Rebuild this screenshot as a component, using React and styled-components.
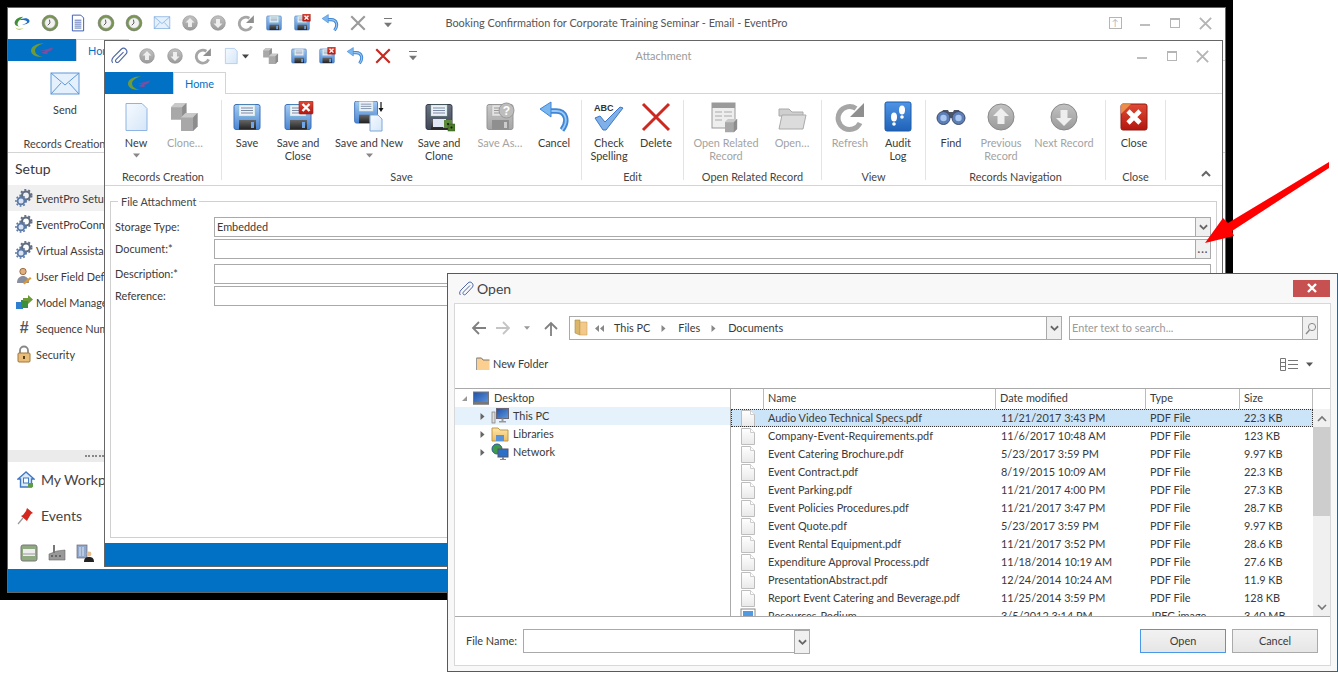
import React from 'react';
import styled, { createGlobalStyle } from 'styled-components';

const BLUE = '#0071c5';
const FONT = 'Lato, "Open Sans", "Liberation Sans", sans-serif';

const Global = createGlobalStyle`
  html, body { margin: 0; background: #fff; }
  body { font: 10.9px ${FONT}; color: #3a3a3a; }
  * { box-sizing: border-box; }
`;

/* ---------- icons ---------- */
const Svg = ({ size = 32, children, vb = 32 }) => (
  <svg width={size} height={size} viewBox={`0 0 ${vb} ${vb}`} style={{ display: 'block', flexShrink: 0 }}>{children}</svg>
);

const Gradients = () => (
  <svg width="0" height="0" style={{ position: 'absolute' }}>
    <defs>
      <linearGradient id="floppy" x1="0" y1="0" x2="0" y2="1"><stop offset="0" stopColor="#a5cbf4" /><stop offset="1" stopColor="#4a86d2" /></linearGradient>
      <linearGradient id="floppyDark" x1="0" y1="0" x2="0" y2="1"><stop offset="0" stopColor="#6b7280" /><stop offset="1" stopColor="#3f4656" /></linearGradient>
      <linearGradient id="floppyGrey" x1="0" y1="0" x2="0" y2="1"><stop offset="0" stopColor="#c8c8c8" /><stop offset="1" stopColor="#a5a5a5" /></linearGradient>
      <linearGradient id="slot" x1="0" y1="0" x2="0" y2="1"><stop offset="0" stopColor="#666" /><stop offset="1" stopColor="#222" /></linearGradient>
      <linearGradient id="page" x1="0" y1="0" x2="1" y2="1"><stop offset="0" stopColor="#f6faff" /><stop offset="1" stopColor="#d5e6f8" /></linearGradient>
      <linearGradient id="greyBall" x1="0" y1="0" x2="0" y2="1"><stop offset="0" stopColor="#c2c2c2" /><stop offset="1" stopColor="#9a9a9a" /></linearGradient>
      <linearGradient id="filePage" x1="0" y1="0" x2="0" y2="1"><stop offset="0" stopColor="#fff" /><stop offset="1" stopColor="#e9e9e9" /></linearGradient>
      <linearGradient id="redBox" x1="0" y1="0" x2="0" y2="1"><stop offset="0" stopColor="#e04a35" /><stop offset="1" stopColor="#b3170f" /></linearGradient>
      <linearGradient id="book" x1="0" y1="0" x2="0" y2="1"><stop offset="0" stopColor="#4f95e6" /><stop offset="1" stopColor="#1f62b8" /></linearGradient>
      <linearGradient id="folderG" x1="0" y1="0" x2="0" y2="1"><stop offset="0" stopColor="#fde6a8" /><stop offset="1" stopColor="#eebd62" /></linearGradient>
      <linearGradient id="screen" x1="0" y1="0" x2="1" y2="1"><stop offset="0" stopColor="#1f4fa8" /><stop offset="1" stopColor="#5f9ae0" /></linearGradient>
    </defs>
  </svg>
);

const FloppyShape = ({ tone = 'blue' }) => {
  const fill = tone === 'blue' ? 'url(#floppy)' : tone === 'grey' ? 'url(#floppyGrey)' : 'url(#floppyDark)';
  const edge = tone === 'blue' ? '#3a70b8' : tone === 'grey' ? '#949494' : '#333a48';
  const slot = tone === 'grey' ? '#8f8f8f' : 'url(#slot)';
  return (
    <>
      <rect x="3" y="3.5" width="26" height="25" rx="2" fill={fill} stroke={edge} />
      <rect x="8" y="4" width="16" height="11" fill={tone === 'grey' ? '#e4e4e4' : '#eef2f8'} stroke={tone === 'grey' ? '#aaa' : '#8ca'} strokeOpacity=".4" />
      <path d="M10 7h12M10 9.5h12M10 12h12" stroke={tone === 'grey' ? '#999' : '#7a8ba5'} />
      <rect x="8" y="19" width="17" height="9.5" fill={slot} />
      <rect x="20" y="21" width="3" height="6" fill={tone === 'grey' ? '#ccc' : '#6ea6e6'} />
    </>
  );
};

const Save = ({ size }) => <Svg size={size}><FloppyShape /></Svg>;
const SaveClose = ({ size }) => (
  <Svg size={size}>
    <FloppyShape />
    <rect x="17" y="0" width="14" height="13" rx="1" fill="url(#redBox)" stroke="#922" strokeWidth=".6" />
    <path d="M20.5 3l7 7M27.5 3l-7 7" stroke="#fff" strokeWidth="2.4" />
  </Svg>
);
const SaveNew = ({ size }) => (
  <Svg size={size}>
    <g transform="translate(-1 -3) scale(.88)"><FloppyShape /></g>
    <path d="M17 14h8l4 4v12H17z" fill="url(#page)" stroke="#7fa8d8" />
    <path d="M28 1v8" stroke="#111" strokeWidth="1.2" /><path d="M25.5 7h5L28 11z" fill="#111" />
  </Svg>
);
const SaveClone = ({ size }) => (
  <Svg size={size}>
    <FloppyShape tone="dark" />
    <rect x="10" y="18" width="13" height="8" fill="#dfe8f4" />
    <rect x="21" y="19" width="8" height="8" fill="#5d8a3c" />
    <rect x="25" y="23" width="7" height="7" fill="#4d7a2c" stroke="#2f5a18" strokeWidth=".5" />
    <circle cx="25" cy="23" r="1" fill="#111" /><circle cx="28.5" cy="26.5" r="1" fill="#111" />
  </Svg>
);
const SaveAs = ({ size }) => (
  <Svg size={size}>
    <FloppyShape tone="grey" />
    <circle cx="22.5" cy="9.5" r="7.5" fill="#bdbdbd" stroke="#999" />
    <text x="22.5" y="14" fontSize="12" fontWeight="700" fill="#fff" textAnchor="middle" fontFamily="Liberation Sans">?</text>
  </Svg>
);
const Undo = ({ size }) => (
  <Svg size={size}>
    <path d="M10 10h8c10 0 13 10 6 19" fill="none" stroke="#3f86d6" strokeWidth="5.4" />
    <path d="M10 10h8c10 0 13 10 6 19" fill="none" stroke="#9cc9f4" strokeWidth="1.8" />
    <path d="M2 8L13 1v15z" fill="#7ab6f0" stroke="#3f86d6" />
  </Svg>
);
const Cross = ({ size, color = '#9b9b9b', w = 3.8 }) => (
  <Svg size={size}><path d="M4 4l24 24M28 4L4 28" stroke={color} strokeWidth={w} /></Svg>
);
const Delete = ({ size }) => (
  <Svg size={size}><path d="M3 3l26 26M29 3L3 29" stroke="#cc2a20" strokeWidth="3" /></Svg>
);
const Ball = ({ size, up }) => (
  <Svg size={size}>
    <circle cx="16" cy="16" r="13" fill="url(#greyBall)" stroke="#8a8a8a" />
    <path d={up ? 'M16 7l8 8h-4.5v8h-7v-8H8z' : 'M16 25l8-8h-4.5V9h-7v8H8z'} fill="#eee" />
  </Svg>
);
const Refresh = ({ size }) => (
  <Svg size={size}>
    <path d="M26 22A11.5 11.5 0 1 1 22 7.5" fill="none" stroke="#a6a6a6" strokeWidth="5" />
    <path d="M30 2v14H16z" fill="#8f8f8f" />
  </Svg>
);
const NewPage = ({ size }) => (
  <Svg size={size}><path d="M6 2.5h16l5 5v22H6z" fill="url(#page)" stroke="#8db4e2" /></Svg>
);
const Cube = ({ x, y, s = 13 }) => (
  <g transform={`translate(${x} ${y})`}>
    <path d={`M0 ${s * 0.3}L${s * 0.3} 0H${s * 1.1}V${s * 0.9}L${s * 0.8} ${s * 1.2}H0z`} fill="#a8a8a8" />
    <path d={`M0 ${s * 0.3}L${s * 0.3} 0H${s * 1.1}L${s * 0.8} ${s * 0.3}z`} fill="#c9c9c9" />
    <path d={`M${s * 0.8} ${s * 0.3}L${s * 1.1} 0V${s * 0.9}L${s * 0.8} ${s * 1.2}z`} fill="#8d8d8d" />
  </g>
);
const Clone = ({ size }) => <Svg size={size}><Cube x="2" y="2" s={14} /><Cube x="12" y="12" s={15} /></Svg>;
const Check = ({ size }) => (
  <Svg size={size}>
    <text x="1" y="10" fontSize="9" fontWeight="700" fill="#333" fontFamily="Liberation Sans">ABC</text>
    <path d="M2 17l5-2 5 6L27 6l3 1-17 22h-3z" fill="#7fb0e8" stroke="#3f78c4" />
  </Svg>
);
const RelatedRecord = ({ size }) => (
  <Svg size={size}>
    <rect x="2" y="2" width="23" height="25" fill="#eee" stroke="#999" />
    <rect x="2" y="2" width="23" height="5" fill="#9a9a9a" />
    <path d="M5 11h7M5 15h7M5 19h7M14 11h8M14 15h8" stroke="#aaa" />
    <Cube x="15" y="18" s={11} />
  </Svg>
);
const OpenFolder = ({ size }) => (
  <Svg size={size}>
    <path d="M3 8h10l3 3h11v4H3z" fill="#cfcfcf" stroke="#aaa" />
    <path d="M6 14h24l-3 14H3z" fill="#dcdcdc" stroke="#aaa" />
  </Svg>
);
const Audit = ({ size }) => (
  <Svg size={size}>
    <rect x="3" y="1" width="26" height="29" rx="2" fill="url(#book)" stroke="#1a5aa8" />
    <ellipse cx="12" cy="16" rx="3" ry="4.5" fill="#fff" /><ellipse cx="12" cy="23" rx="1.8" ry="1.8" fill="#fff" />
    <ellipse cx="20" cy="9" rx="3" ry="4.5" fill="#fff" /><ellipse cx="20" cy="16" rx="1.8" ry="1.8" fill="#fff" />
  </Svg>
);
const Binoculars = ({ size }) => (
  <Svg size={size}>
    <path d="M8 9h5l1 2h4l1-2h5l4 8H4z" fill="#4d5566" />
    <circle cx="8.5" cy="17" r="6.5" fill="#5d7fb8" stroke="#3d4a66" /><circle cx="23.5" cy="17" r="6.5" fill="#5d7fb8" stroke="#3d4a66" />
    <circle cx="8.5" cy="17" r="3.2" fill="#a9c6f0" /><circle cx="23.5" cy="17" r="3.2" fill="#a9c6f0" />
  </Svg>
);
const CloseBox = ({ size }) => (
  <Svg size={size}>
    <rect x="3" y="3" width="26" height="26" rx="2" fill="url(#redBox)" stroke="#8f1a10" />
    <path d="M3 3h10L3 13z" fill="#f0a050" opacity=".8" />
    <path d="M10 10l12 12M22 10L10 22" stroke="#fff" strokeWidth="4.6" />
  </Svg>
);
const Mail = ({ size }) => (
  <Svg size={size}>
    <rect x="2" y="5" width="28" height="21" fill="#e4f0fc" stroke="#5f97d8" />
    <path d="M2 5l14 12L30 5M2 26l10-11M30 26L20 15" fill="none" stroke="#5f97d8" />
  </Svg>
);
const Clock = ({ size }) => (
  <Svg size={size}>
    <circle cx="16" cy="16" r="14" fill="#789650" stroke="#666" />
    <circle cx="16" cy="16" r="9.5" fill="#f2f2f2" stroke="#999" />
    <path d="M16 16l-1-6M16 16l-4 4" stroke="#444" strokeWidth="1.5" />
  </Svg>
);
const Doc = ({ size }) => (
  <Svg size={size}>
    <path d="M6 2h15l5 5v23H6z" fill="#fff" stroke="#2c4fa8" strokeWidth="1.6" />
    <path d="M10 11h12M10 14.5h12M10 18h12M10 21.5h12M10 25h12" stroke="#2c4fa8" strokeWidth="1.4" />
  </Svg>
);
const Clip = ({ size, color = '#4f66a8' }) => (
  <Svg size={size}>
    <path d="M24 9L11 22c-2 2-1 4 0 5s3 1 5-1L29 12c2-3 1-6-1-8s-5-3-8 0L6 18c-4 5-3 8-1 10" fill="none" stroke={color} strokeWidth="2" />
  </Svg>
);
const LogoSwirl = ({ size }) => (
  <Svg size={size}>
    <path d="M18 5C8 5 2 12 3 17c1 4 5 5 9 5-4-1-5-4-3-8 2-3 6-6 9-9z" fill="#3f8f3a" />
    <path d="M11 11c6-4 15-5 18 0 2 4-5 8-13 8 4-1 9-3 9-5 0-3-8-4-14-3z" fill="#1f6fc0" />
    <path d="M4 24c4 3 10 3 15 1-5 4-11 5-15-1z" fill="#b9cf5a" />
  </Svg>
);
const BrandMark = () => (
  <svg width="23" height="16" viewBox="0 0 34 22" style={{ display: 'block' }}>
    <path d="M20 1C8 1 0 6 0 12c0 6 8 10 18 9-8-1-12-5-12-9 0-5 6-9 14-11z" fill="#6f9a3a" />
    <path d="M13 12c7-1 14-3 20-5-2 4-4 6-9 7 1 1 1 2 0 3-3 0-7-1-9-2 3-1 5-2 7-3z" fill="#7a4fa0" />
  </svg>
);
const Gears = ({ size = 18 }) => (
  <Svg size={size} vb={18}>
    <circle cx="11" cy="6.5" r="4" fill="none" stroke="#5f6c80" strokeWidth="2.2" />
    <circle cx="11" cy="6.5" r="5.6" fill="none" stroke="#5f6c80" strokeWidth="1.8" strokeDasharray="2 2" />
    <circle cx="6" cy="12" r="3.4" fill="#d8e4f2" stroke="#5a78a8" strokeWidth="1.8" />
    <circle cx="6" cy="12" r="5" fill="none" stroke="#5a78a8" strokeWidth="1.6" strokeDasharray="1.8 1.8" />
  </Svg>
);
const UserField = () => (
  <Svg size={18} vb={18}>
    <circle cx="8" cy="4.5" r="3.2" fill="#e0b080" stroke="#8a5a30" strokeWidth=".8" />
    <path d="M2 16c0-5 3-7 6-7s6 2 6 7z" fill="#8a8fa0" />
    <path d="M8 16l7-6 1.5 1.5-7 6z" fill="#d89a3a" />
  </Svg>
);
const ModelMgr = () => (
  <Svg size={18} vb={18}>
    <rect x="1" y="9" width="7" height="7" fill="#2f7fd0" />
    <rect x="6" y="7" width="7" height="8" fill="#3c8f3c" />
    <path d="M8 5h5V2l5 4.5L13 11V8H8z" fill="#6a9a3a" />
  </Svg>
);
const LockIco = () => (
  <Svg size={18} vb={18}>
    <path d="M5 8V5.5a4 4 0 0 1 8 0V8" fill="none" stroke="#888" strokeWidth="1.8" />
    <rect x="3" y="8" width="12" height="9" rx="1" fill="#e8bd78" stroke="#a0763a" />
    <rect x="8" y="11" width="2" height="3" fill="#5a3d18" />
  </Svg>
);
const HomeIco = () => (
  <Svg size={18} vb={18}>
    <path d="M9 1L1 8h2.5v8h11V8H17z" fill="#dce9f8" stroke="#3f78c4" strokeWidth="1.4" />
    <rect x="6.5" y="7" width="5" height="5" fill="#fff" stroke="#3f78c4" />
    <rect x="11" y="12" width="5" height="4" fill="#5e9a4a" />
  </Svg>
);
const PinIco = () => (
  <Svg size={18} vb={18}>
    <path d="M10 1l6 5-2 1-3 5-1 2-6-5 2-1 3-4z" fill="#d4281e" />
    <path d="M6 11l-5 6" stroke="#999" strokeWidth="1.2" />
  </Svg>
);
const BedIco = () => (
  <Svg size={18} vb={18}>
    <rect x="1" y="1" width="16" height="16" rx="2" fill="#8faa80" stroke="#777" />
    <rect x="3" y="5" width="12" height="7" fill="#eee" /><path d="M3 10h12" stroke="#999" />
  </Svg>
);
const PlantIco = () => (
  <Svg size={18} vb={18}>
    <path d="M1 10l8-3 8-1v10H1z" fill="#999" stroke="#666" strokeWidth=".6" />
    <rect x="5" y="1" width="2" height="8" fill="#777" />
    <path d="M3 12h2M7 12h2M11 12h2" stroke="#333" />
  </Svg>
);
const BuildingIco = () => (
  <Svg size={18} vb={18}>
    <rect x="1" y="1" width="10" height="13" fill="#8fa8cc" stroke="#667" strokeWidth=".7" />
    <path d="M4 3v9M7 3v9" stroke="#dfe8f4" />
    <circle cx="13" cy="10" r="2.4" fill="#e8bd88" />
    <path d="M8 18c0-4 2-5 5-5s5 1 5 5z" fill="#222" />
  </Svg>
);
const NewFolderIco = () => (
  <Svg size={14} vb={14}>
    <path d="M0.5 1h5l1.5 2h6.5v10H.5z" fill="#fbcf8f" />
    <path d="M0.5 3V1h5l1.5 2h6.5" fill="none" stroke="#777" />
    <path d="M.5 1v12" stroke="#999" />
  </Svg>
);
const PathFolder = () => (
  <Svg size={18} vb={18}>
    <path d="M3 1h5v15l-5-2z" fill="#d9b66a" stroke="#a98a3f" strokeWidth=".6" />
    <path d="M8 3h7v13H8z" fill="#f3c98a" stroke="#c9a15a" strokeWidth=".6" />
  </Svg>
);
const LibFolder = () => (
  <Svg size={18} vb={18}>
    <path d="M1 3h6l2 2h8v11H1z" fill="url(#folderG)" stroke="#c09a48" />
    <rect x="5" y="10" width="8" height="6" fill="#5a94d8" />
  </Svg>
);
const Monitor = ({ size = 18 }) => (
  <Svg size={size} vb={18}>
    <rect x="1.5" y="3" width="15" height="12" fill="url(#screen)" stroke="#777" />
    <rect x="1" y="13" width="16" height="2.5" fill="#777" />
  </Svg>
);
const ThisPc = () => (
  <Svg size={18} vb={18}>
    <rect x="1" y="5" width="3" height="11" fill="#ddd" stroke="#777" strokeWidth=".7" />
    <rect x="5.5" y="1.5" width="12" height="10" fill="url(#screen)" stroke="#667" />
    <path d="M8 14h7v1.5H8z M10.5 11.5h2v3h-2z" fill="#999" />
  </Svg>
);
const NetworkIco = () => (
  <Svg size={18} vb={18}>
    <circle cx="6" cy="6" r="5" fill="#3f9a4a" stroke="#2a5f9a" />
    <rect x="7" y="6" width="10" height="8" fill="#2c6fc8" stroke="#556" />
    <path d="M11 14h2v2h2v1H9v-1h2z" fill="#888" />
  </Svg>
);
const FileIco = ({ kind }) => kind === 'image' ? (
  <Svg size={18} vb={18}>
    <rect x="2" y="2" width="14" height="14" fill="#fff" stroke="#888" />
    <rect x="4" y="4" width="10" height="8" fill="#4f9ae0" />
  </Svg>
) : (
  <Svg size={18} vb={18}>
    <path d="M2.5 1.5h9l4 4v12h-13z" fill="url(#filePage)" stroke="#bdbdbd" />
    <path d="M11.5 1.5v4h4" fill="#fff" stroke="#ccc" />
  </Svg>
);
const DownChevron = ({ size = 9, color = '#666' }) => (
  <svg width={size} height={size} viewBox="0 0 10 10" style={{ display: 'block' }}><path d="M1 2.5l4 4 4-4" fill="none" stroke={color} strokeWidth="2" /></svg>
);
const Tri = ({ dir = 'down', size = 7, color = '#666' }) => {
  const d = { down: 'M0 1.5h7L3.5 5.5z', right: 'M1.5 0v7l4-3.5z', left: 'M5.5 0v7l-4-3.5z', corner: 'M6 1v5H1z' }[dir];
  return <svg width={size} height={size} viewBox="0 0 7 7" style={{ display: 'block', flexShrink: 0 }}><path d={d} fill={color} /></svg>;
};

/* ---------- window chrome ---------- */
const Page = styled.div`
  position: relative;
  width: 1338px;
  height: 673px;
  overflow: hidden;
  background: #fff;
`;
const Backdrop = styled.div`
  width: 1233px;
  height: 600px;
  background: #000;
  padding: 7px;
`;
const MainWindow = styled.div`
  height: 100%;
  background: #fff;
  border: 1px solid #666;
  display: flex;
  flex-direction: column;
  overflow: hidden;
`;
const AttachmentWindow = styled(MainWindow)`
  position: absolute;
  left: 104px;
  top: 40px;
  width: 1119px;
  height: 527px;
`;
const TitleBar = styled.div`
  height: 31px;
  padding-bottom: 1px;
  flex-shrink: 0;
  display: grid;
  grid-template-columns: 1fr auto 1fr;
  align-items: center;
`;
const TitleText = styled.div`
  padding-bottom: 1px;
  color: ${p => (p.$dim ? '#9a9a9a' : '#555')};
  white-space: nowrap;
`;
const QuickBar = styled.div`
  display: flex;
  align-items: center;
`;
const QuickSlot = styled.div`
  width: ${p => p.$w || 28}px;
  height: 24px;
  display: flex;
  align-items: center;
  justify-content: center;
`;
const MiniCaret = styled.div`
  width: 7px;
  height: 7px;
  margin: 0 8px 0 -3px;
  display: flex;
`;
const OverflowMark = styled.div`
  width: 8px;
  border-top: 1px solid #777;
  padding-top: 2px;
`;
const WinControls = styled.div`
  justify-self: end;
  display: flex;
  padding-right: 5px;
`;
const WinBtn = styled.div`
  width: 30px;
  height: 20px;
  display: flex;
  align-items: center;
  justify-content: center;
`;
const MinGlyph = styled.div`
  width: 10px;
  height: 2px;
  margin-top: 4px;
  background: #bdbdbd;
`;
const MaxGlyph = styled.div`
  width: 10px;
  height: 10px;
  border: 1px solid #b5b5b5;
  border-top-width: 2px;
`;
const PinGlyph = styled.div`
  width: 13px;
  height: 12px;
  border: 1px solid #b5b5b5;
  color: #b5b5b5;
  font-size: 9px;
  line-height: 10px;
  text-align: center;
`;
const TabRow = styled.div`
  height: 22px;
  flex-shrink: 0;
  display: flex;
  border-bottom: 1px solid #d4d4d4;
`;
const BrandTab = styled.div`
  width: 68px;
  height: 22px;
  background: ${BLUE};
  display: flex;
  align-items: center;
  justify-content: center;
`;
const HomeTab = styled.div`
  width: 53px;
  height: 22px;
  padding-top: 4px;
  text-align: center;
  color: ${BLUE};
  background: #fff;
  border: 1px solid #d4d4d4;
  border-bottom: 0;
`;
const Ribbon = styled.div`
  height: 92px;
  flex-shrink: 0;
  display: flex;
  border-bottom: 1px solid #d4d4d4;
`;
const Group = styled.div`
  width: ${p => p.$w}px;
  height: 80px;
  margin-top: 6px;
  flex-shrink: 0;
  border-right: 1px solid #e4e4e4;
  display: flex;
  flex-direction: column;
`;
const GroupButtons = styled.div`
  height: 70px;
  padding: 1px 0 0 ${p => p.$pad || 0}px;
  display: flex;
`;
const GroupLabel = styled.div`
  height: 13px;
  line-height: 13px;
  margin-bottom: -3px;
  text-align: center;
  color: #444;
  white-space: nowrap;
`;
const RibbonButton = styled.div`
  width: ${p => p.$w}px;
  flex-shrink: 0;
  display: flex;
  flex-direction: column;
  align-items: center;
  color: ${p => (p.$off ? '#a3a3a3' : '#3a3a3a')};
`;
const ButtonLabel = styled.div`
  margin-top: 3px;
  line-height: 13px;
  text-align: center;
  white-space: pre-line;
`;
const CaretBelow = styled.div`
  margin-top: 3px;
`;
const Collapse = styled.div`
  margin: 76px 11px 0 auto;
`;

/* ---------- sidebar behind ---------- */
const MainBody = styled.div`
  flex: 1;
  min-height: 0;
  display: flex;
  flex-direction: column;
`;
const Sidebar = styled.div`
  width: 300px;
  flex: 1;
  display: flex;
  flex-direction: column;
`;
const SideTitle = styled.div`
  height: 32px;
  padding: 7px 0 0 7px;
  font-size: 14px;
`;
const SideItem = styled.div`
  height: 26px;
  flex-shrink: 0;
  padding-left: 7px;
  display: flex;
  align-items: center;
  gap: 3px;
  white-space: nowrap;
  background: ${p => (p.$on ? '#f0f0f0' : 'transparent')};
`;
const SideIcon = styled.div`
  width: 18px;
  display: flex;
  justify-content: center;
  font: italic 700 16px "Liberation Sans", sans-serif;
  color: #555;
`;
const Splitter = styled.div`
  height: 12px;
  margin-top: auto;
  flex-shrink: 0;
  background: #ebebeb;
  padding: 5px 0 0 77px;
`;
const SplitDots = styled.div`
  height: 2px;
  width: 19px;
  background: repeating-linear-gradient(90deg, #888 0 2px, transparent 2px 3.4px);
`;
const WorkRow = styled.div`
  height: 36px;
  flex-shrink: 0;
  padding: 0 0 1px 9px;
  display: flex;
  align-items: center;
  gap: 6px;
  white-space: nowrap;
  font-size: 14px;
  color: #444;
`;
const MiniRow = styled.div`
  height: 35px;
  flex-shrink: 0;
  padding: 3px 0 0 12px;
  display: flex;
  align-items: center;
  gap: 10px;
`;
const StatusBar = styled.div`
  height: ${p => p.$h}px;
  flex-shrink: 0;
  background: ${BLUE};
`;

/* ---------- attachment form ---------- */
const FormArea = styled.div`
  flex: 1;
  padding: 9px 5px 5px;
  display: flex;
  background: #fff;
`;
const FieldBox = styled.fieldset`
  flex: 1;
  margin: 0;
  padding: 3px 5px 0 4px;
  border: 1px solid #d0d0d0;
  min-width: 0;
`;
const Legend = styled.legend`
  margin-left: 3px;
  padding: 0 3px;
  line-height: 13px;
  color: #444;
`;
const FormRow = styled.div`
  height: 20px;
  margin-top: ${p => p.$gap}px;
  display: flex;
`;
const FieldLabel = styled.div`
  width: 99px;
  flex-shrink: 0;
  line-height: 20px;
  white-space: nowrap;
`;
const FieldInput = styled.div`
  flex: 1;
  border: 1px solid #aaa;
  padding-left: 2px;
  line-height: 18px;
  display: flex;
  justify-content: space-between;
`;
const FieldButton = styled.div`
  width: 16px;
  margin: -1px -1px -1px 0;
  border: 1px solid #aaa;
  background: #f0f0f0;
  display: flex;
  align-items: center;
  justify-content: center;
  font-weight: 700;
  letter-spacing: 1px;
  color: #555;
  line-height: 10px;
`;

/* ---------- open dialog ---------- */
const Dialog = styled.div`
  position: absolute;
  left: 447px;
  top: 273px;
  width: 891px;
  height: 399px;
  background: #f8f8f8;
  border: 1px solid ${BLUE};
  display: flex;
  flex-direction: column;
`;
const DialogHead = styled.div`
  height: 29px;
  flex-shrink: 0;
  padding: 0 7px 0 10px;
  display: flex;
  align-items: center;
  gap: 3px;
  font-size: 14px;
  color: #444;
`;
const DialogClose = styled.div`
  width: 37px;
  height: 17px;
  margin: -1px 0 0 auto;
  background: #c75050;
  color: #fff;
  display: flex;
  align-items: center;
  justify-content: center;
`;
const DialogPanel = styled.div`
  flex: 1;
  min-height: 0;
  margin: 0 6px 5px;
  background: #fff;
  border: 1px solid #d8d8d8;
  display: flex;
  flex-direction: column;
`;
const NavRow = styled.div`
  height: 24px;
  margin-top: 12px;
  padding: 0 12px;
  display: flex;
  align-items: center;
`;
const NavBtn = styled.div`
  width: 24px;
  display: flex;
  justify-content: center;
`;
const PathBox = styled.div`
  height: 24px;
  flex: 1;
  margin: 0 7px 0 6px;
  border: 1px solid #aaa;
  padding-left: 2px;
  display: flex;
  align-items: center;
`;
const Crumb = styled.span`
  margin: 0 10px 2px ${p => p.$before || 11}px;
`;
const ComboButton = styled.div`
  width: 16px;
  height: calc(100% + 2px);
  margin-left: auto;
  margin-right: -1px;
  border: 1px solid #aaa;
  background: #f0f0f0;
  display: flex;
  align-items: center;
  justify-content: center;
  flex-shrink: 0;
`;
const SearchBox = styled.div`
  width: 249px;
  height: 24px;
  border: 1px solid #aaa;
  padding-left: 2px;
  color: #9a9a9a;
  display: flex;
  align-items: center;
`;
const SearchHint = styled.span`
  margin-bottom: 2px;
`;
const ActionRow = styled.div`
  height: 24px;
  margin: 12px 0;
  padding: 0 17px 0 21px;
  display: flex;
  align-items: center;
  gap: 3px;
`;
const ActionText = styled.span`
  margin-bottom: 2px;
`;
const ViewSwitch = styled.div`
  margin-left: auto;
  display: flex;
  align-items: center;
  gap: 8px;
`;
const SplitPane = styled.div`
  flex: 1;
  min-height: 0;
  display: flex;
  border-top: 1px solid #aaa;
  border-bottom: 1px solid #aaa;
`;
const Tree = styled.div`
  width: 276px;
  flex-shrink: 0;
  border-right: 1px solid #aaa;
`;
const TreeRow = styled.div`
  height: 18px;
  padding-left: ${p => p.$in}px;
  display: flex;
  align-items: center;
  gap: 4px;
  background: ${p => (p.$on ? '#e5f1fb' : 'transparent')};
`;
const TreeText = styled.span`
  margin-bottom: 2px;
`;
const TreeIcon = styled.div`
  width: 18px;
  flex-shrink: 0;
  margin-left: ${p => p.$nudge || 0}px;
`;
const FileList = styled.div`
  flex: 1;
  min-width: 0;
  display: flex;
  flex-direction: column;
`;
const HeaderRow = styled.div`
  height: 20px;
  flex-shrink: 0;
  display: grid;
  grid-template-columns: 33px 232px 150px 94px 73px 1fr;
`;
const HeaderCell = styled.div`
  padding-left: 4px;
  line-height: 18px;
  border-right: 1px solid #bbb;
  &:last-child { border-right: 0; }
`;
const ListBody = styled.div`
  flex: 1;
  min-height: 0;
  display: flex;
`;
const Rows = styled.div`
  width: 582px;
  overflow: hidden;
`;
const FileRow = styled.div`
  height: 18px;
  display: grid;
  grid-template-columns: 33px 232px 150px 94px 73px;
  align-items: center;
  white-space: nowrap;
  background: ${p => (p.$on ? '#cce4f7' : 'transparent')};
  outline: ${p => (p.$on ? '1px dotted #333' : 'none')};
  outline-offset: -1px;
`;
const FileCell = styled.div`
  padding: 0 0 1px 4px;
  &:nth-child(1) { padding: 0 0 0 8px; }
  &:nth-child(3) { padding-left: 5px; }
`;
const ScrollBar = styled.div`
  width: 17px;
  flex-shrink: 0;
  background: #f0f0f0;
  display: flex;
  flex-direction: column;
`;
const ScrollEnd = styled.div`
  height: 18px;
  flex-shrink: 0;
  display: flex;
  align-items: center;
  justify-content: center;
`;
const ScrollThumb = styled.div`
  height: 89px;
  background: #cdcdcd;
`;
const ScrollGap = styled.div`
  flex: 1;
`;
const Footer = styled.div`
  height: 48px;
  flex-shrink: 0;
  padding: 12px 12px 0 11px;
  display: flex;
  gap: 6px;
`;
const FooterLabel = styled.div`
  width: 51px;
  line-height: 24px;
  white-space: nowrap;
`;
const NameCombo = styled.div`
  width: 287px;
  height: 24px;
  border: 1px solid #aaa;
  display: flex;
`;
const DlgButton = styled.div`
  width: 86px;
  height: 24px;
  margin-left: ${p => (p.$first ? 'auto' : '0')};
  border: 1px solid ${p => (p.$first ? '#4a98e8' : '#aaa')};
  background: linear-gradient(#f2f2f2, #e6e6e6);
  text-align: center;
  line-height: 22px;
`;
const ArrowLayer = styled.svg`
  position: absolute;
  left: 0;
  top: 0;
  pointer-events: none;
`;

/* ---------- data ---------- */
const groups = [
  { w: 117, pad: 6, label: 'Records Creation', items: [
    { w: 50, Icon: NewPage, text: 'New', caret: true },
    { w: 48, Icon: Clone, text: 'Clone…', off: true },
  ] },
  { w: 360, pad: 3, label: 'Save', items: [
    { w: 44, Icon: Save, text: 'Save' },
    { w: 58, Icon: SaveClose, text: 'Save and\nClose' },
    { w: 84, Icon: SaveNew, text: 'Save and New', caret: true },
    { w: 56, Icon: SaveClone, text: 'Save and\nClone' },
    { w: 66, Icon: SaveAs, text: 'Save As…', off: true },
    { w: 42, Icon: Undo, text: 'Cancel' },
  ] },
  { w: 102, pad: 2, label: 'Edit', items: [
    { w: 50, Icon: Check, text: 'Check\nSpelling' },
    { w: 44, Icon: Delete, text: 'Delete' },
  ] },
  { w: 138, pad: 4, label: 'Open Related Record', items: [
    { w: 76, Icon: RelatedRecord, text: 'Open Related\nRecord', off: true },
    { w: 56, Icon: OpenFolder, text: 'Open…', off: true },
  ] },
  { w: 104, pad: 4, label: 'View', items: [
    { w: 48, Icon: Refresh, text: 'Refresh', off: true },
    { w: 48, Icon: Audit, text: 'Audit\nLog' },
  ] },
  { w: 180, pad: 2, label: 'Records Navigation', items: [
    { w: 46, Icon: Binoculars, text: 'Find' },
    { w: 54, Icon: p => <Ball {...p} up />, text: 'Previous\nRecord', off: true },
    { w: 72, Icon: p => <Ball {...p} />, text: 'Next Record', off: true },
  ] },
  { w: 60, pad: 4, label: 'Close', items: [
    { w: 48, Icon: CloseBox, text: 'Close' },
  ] },
];

const sideItems = [
  { text: 'EventPro Setup', icon: <Gears />, on: true },
  { text: 'EventProConnect', icon: <Gears /> },
  { text: 'Virtual Assistant', icon: <Gears /> },
  { text: 'User Field Definitions', icon: <UserField /> },
  { text: 'Model Management', icon: <ModelMgr /> },
  { text: 'Sequence Numbers', icon: '#' },
  { text: 'Security', icon: <LockIco /> },
];

const files = [
  ['Audio Video Technical Specs.pdf', '11/21/2017 3:43 PM', 'PDF File', '22.3 KB'],
  ['Company-Event-Requirements.pdf', '11/6/2017 10:48 AM', 'PDF File', '123 KB'],
  ['Event Catering Brochure.pdf', '5/23/2017 3:59 PM', 'PDF File', '9.97 KB'],
  ['Event Contract.pdf', '8/19/2015 10:09 AM', 'PDF File', '22.3 KB'],
  ['Event Parking.pdf', '11/21/2017 4:00 PM', 'PDF File', '27.3 KB'],
  ['Event Policies Procedures.pdf', '11/21/2017 3:47 PM', 'PDF File', '28.7 KB'],
  ['Event Quote.pdf', '5/23/2017 3:59 PM', 'PDF File', '9.97 KB'],
  ['Event Rental Equipment.pdf', '11/21/2017 3:52 PM', 'PDF File', '28.6 KB'],
  ['Expenditure Approval Process.pdf', '11/18/2014 10:19 AM', 'PDF File', '27.6 KB'],
  ['PresentationAbstract.pdf', '12/24/2014 10:24 AM', 'PDF File', '11.9 KB'],
  ['Report Event Catering and Beverage.pdf', '11/25/2014 3:59 PM', 'PDF File', '128 KB'],
  ['Resources-Podium', '3/5/2012 3:14 PM', 'JPEG image', '3.40 MB'],
];

const RibbonBtn = ({ w, Icon, text, caret, off }) => (
  <RibbonButton $w={w} $off={off}>
    <Icon size={32} />
    <ButtonLabel>{text}</ButtonLabel>
    {caret && <CaretBelow><Tri color="#888" /></CaretBelow>}
  </RibbonButton>
);

const Overflow = () => (
  <QuickSlot $w={32}>
    <div><OverflowMark /><Tri size={8} color="#777" /></div>
  </QuickSlot>
);

const Quick = ({ Icon, ...rest }) => (
  <QuickSlot><Icon size={18} {...rest} /></QuickSlot>
);

export default function App() {
  return (
    <Page>
      <Global />
      <Gradients />
      <Backdrop>
        <MainWindow>
          <TitleBar>
            <QuickBar>
              <Quick Icon={LogoSwirl} /><Quick Icon={Clock} /><Quick Icon={Doc} /><Quick Icon={Clock} /><Quick Icon={Clock} />
              <Quick Icon={Mail} /><Quick Icon={Ball} up /><Quick Icon={Ball} /><Quick Icon={Refresh} /><Quick Icon={Save} />
              <Quick Icon={SaveClose} /><Quick Icon={Undo} /><Quick Icon={Cross} />
              <Overflow />
            </QuickBar>
            <TitleText>Booking Confirmation for Corporate Training Seminar - Email - EventPro</TitleText>
            <WinControls>
              <WinBtn><PinGlyph>↑</PinGlyph></WinBtn>
              <WinBtn><MinGlyph /></WinBtn>
              <WinBtn><MaxGlyph /></WinBtn>
              <WinBtn><Cross size={15} color="#b5b5b5" w={4} /></WinBtn>
            </WinControls>
          </TitleBar>
          <TabRow>
            <BrandTab><BrandMark /></BrandTab>
            <HomeTab>Home</HomeTab>
          </TabRow>
          <Ribbon>
            <Group $w={114}>
              <GroupButtons><RibbonBtn w={114} Icon={Mail} text="Send" /></GroupButtons>
              <GroupLabel>Records Creation</GroupLabel>
            </Group>
          </Ribbon>
          <MainBody>
            <Sidebar>
              <SideTitle>Setup</SideTitle>
              {sideItems.map(it => (
                <SideItem key={it.text} $on={it.on}>
                  <SideIcon>{it.icon}</SideIcon>
                  {it.text}
                </SideItem>
              ))}
              <Splitter><SplitDots /></Splitter>
              <WorkRow><HomeIco />My Workplace</WorkRow>
              <WorkRow><PinIco />Events</WorkRow>
              <MiniRow><BedIco /><PlantIco /><BuildingIco /></MiniRow>
            </Sidebar>
            <StatusBar $h={23} />
          </MainBody>
        </MainWindow>
      </Backdrop>

      <AttachmentWindow>
        <TitleBar>
          <QuickBar>
            <Quick Icon={Clip} /><Quick Icon={Ball} up /><Quick Icon={Ball} /><Quick Icon={Refresh} /><Quick Icon={NewPage} />
            <MiniCaret><Tri color="#444" /></MiniCaret>
            <Quick Icon={Clone} /><Quick Icon={Save} /><Quick Icon={SaveClose} /><Quick Icon={Undo} />
            <Quick Icon={Cross} color="#c8281e" />
            <Overflow />
          </QuickBar>
          <TitleText $dim>Attachment</TitleText>
          <WinControls>
            <WinBtn><MinGlyph /></WinBtn>
            <WinBtn><MaxGlyph /></WinBtn>
            <WinBtn><Cross size={15} color="#b5b5b5" w={4} /></WinBtn>
          </WinControls>
        </TitleBar>
        <TabRow>
          <BrandTab><BrandMark /></BrandTab>
          <HomeTab>Home</HomeTab>
        </TabRow>
        <Ribbon>
          {groups.map(g => (
            <Group key={g.label} $w={g.w}>
              <GroupButtons $pad={g.pad}>
                {g.items.map(b => <RibbonBtn key={b.text} {...b} />)}
              </GroupButtons>
              <GroupLabel>{g.label}</GroupLabel>
            </Group>
          ))}
          <Collapse>
            <svg width="10" height="7" viewBox="0 0 10 7" style={{ display: 'block' }}><path d="M1 6l4-4 4 4" fill="none" stroke="#666" strokeWidth="2" /></svg>
          </Collapse>
        </Ribbon>
        <FormArea>
          <FieldBox>
            <Legend>File Attachment</Legend>
            <FormRow $gap={6}>
              <FieldLabel>Storage Type:</FieldLabel>
              <FieldInput>Embedded<FieldButton><DownChevron /></FieldButton></FieldInput>
            </FormRow>
            <FormRow $gap={2}>
              <FieldLabel>Document:*</FieldLabel>
              <FieldInput><span /><FieldButton>...</FieldButton></FieldInput>
            </FormRow>
            <FormRow $gap={5}>
              <FieldLabel>Description:*</FieldLabel>
              <FieldInput />
            </FormRow>
            <FormRow $gap={2}>
              <FieldLabel>Reference:</FieldLabel>
              <FieldInput />
            </FormRow>
          </FieldBox>
        </FormArea>
        <StatusBar $h={23} />
      </AttachmentWindow>

      <Dialog>
        <DialogHead>
          <Clip size={16} />
          Open
          <DialogClose>
            <svg width="10" height="10" viewBox="0 0 10 10"><path d="M1 1l8 8M9 1L1 9" stroke="#fff" strokeWidth="2.4" /></svg>
          </DialogClose>
        </DialogHead>
        <DialogPanel>
          <NavRow>
            <NavBtn><svg width="16" height="14" viewBox="0 0 16 14"><path d="M15 7H2M8 1L2 7l6 6" fill="none" stroke="#808080" strokeWidth="1.8" /></svg></NavBtn>
            <NavBtn><svg width="16" height="14" viewBox="0 0 16 14"><path d="M1 7h13M8 1l6 6-6 6" fill="none" stroke="#c4c4c4" strokeWidth="1.8" /></svg></NavBtn>
            <NavBtn><Tri size={6} color="#999" /></NavBtn>
            <NavBtn><svg width="14" height="15" viewBox="0 0 14 15"><path d="M7 15V2M1 8l6-6 6 6" fill="none" stroke="#808080" strokeWidth="1.8" /></svg></NavBtn>
            <PathBox>
              <PathFolder />
              <svg width="9" height="7" viewBox="0 0 9 7" style={{ margin: '0 0 0 5px', flexShrink: 0 }}><path d="M4 0v7L0 3.5zM9 0v7L5 3.5z" fill="#888" /></svg>
              <Crumb $before={10}>This PC</Crumb>
              <Tri dir="right" color="#888" />
              <Crumb>Files</Crumb>
              <Tri dir="right" color="#888" />
              <Crumb>Documents</Crumb>
              <ComboButton><DownChevron /></ComboButton>
            </PathBox>
            <SearchBox>
              <SearchHint>Enter text to search...</SearchHint>
              <ComboButton>
                <svg width="13" height="13" viewBox="0 0 13 13"><circle cx="8" cy="5" r="3.6" fill="none" stroke="#888" /><path d="M5.5 8L2 12" stroke="#888" strokeWidth="1.4" /></svg>
              </ComboButton>
            </SearchBox>
          </NavRow>
          <ActionRow>
            <NewFolderIco />
            <ActionText>New Folder</ActionText>
            <ViewSwitch>
              <svg width="18" height="13" viewBox="0 0 18 13"><path d="M.5.5h5v12h-5zM.5 4.5h5M.5 8.5h5M8 2.5h10M8 6.5h10M8 10.5h10" fill="none" stroke="#777" /></svg>
              <Tri color="#555" />
            </ViewSwitch>
          </ActionRow>
          <SplitPane>
            <Tree>
              <TreeRow $in={6}>
                <Tri dir="corner" size={7} color="#999" />
                <TreeIcon><Monitor /></TreeIcon>
                <TreeText>Desktop</TreeText>
              </TreeRow>
              <TreeRow $in={24} $on>
                <Tri dir="right" size={7} />
                <TreeIcon $nudge={1}><ThisPc /></TreeIcon>
                <TreeText>This PC</TreeText>
              </TreeRow>
              <TreeRow $in={24}>
                <Tri dir="right" size={7} />
                <TreeIcon $nudge={1}><LibFolder /></TreeIcon>
                <TreeText>Libraries</TreeText>
              </TreeRow>
              <TreeRow $in={24}>
                <Tri dir="right" size={7} />
                <TreeIcon $nudge={1}><NetworkIco /></TreeIcon>
                <TreeText>Network</TreeText>
              </TreeRow>
            </Tree>
            <FileList>
              <HeaderRow>
                <HeaderCell />
                <HeaderCell>Name</HeaderCell>
                <HeaderCell>Date modified</HeaderCell>
                <HeaderCell>Type</HeaderCell>
                <HeaderCell>Size</HeaderCell>
                <HeaderCell />
              </HeaderRow>
              <ListBody>
                <Rows>
                  {files.map((f, i) => (
                    <FileRow key={f[0]} $on={i === 0}>
                      <FileCell><FileIco kind={i === 11 ? 'image' : 'pdf'} /></FileCell>
                      <FileCell>{f[0]}</FileCell>
                      <FileCell>{f[1]}</FileCell>
                      <FileCell>{f[2]}</FileCell>
                      <FileCell>{f[3]}</FileCell>
                    </FileRow>
                  ))}
                </Rows>
                <ScrollBar>
                  <ScrollEnd><svg width="10" height="7" viewBox="0 0 10 7"><path d="M1 6l4-4 4 4" fill="none" stroke="#777" strokeWidth="1.6" /></svg></ScrollEnd>
                  <ScrollThumb />
                  <ScrollGap />
                  <ScrollEnd><svg width="10" height="7" viewBox="0 0 10 7"><path d="M1 1l4 4 4-4" fill="none" stroke="#777" strokeWidth="1.6" /></svg></ScrollEnd>
                </ScrollBar>
              </ListBody>
            </FileList>
          </SplitPane>
          <Footer>
            <FooterLabel>File Name:</FooterLabel>
            <NameCombo><ComboButton><DownChevron /></ComboButton></NameCombo>
            <DlgButton $first>Open</DlgButton>
            <DlgButton>Cancel</DlgButton>
          </Footer>
        </DialogPanel>
      </Dialog>

      <ArrowLayer width="1338" height="673">
        <polygon points="1329,162 1329,168 1232,231 1234,236 1205,243 1223,218 1228,223" fill="#f00" />
      </ArrowLayer>
    </Page>
  );
}
